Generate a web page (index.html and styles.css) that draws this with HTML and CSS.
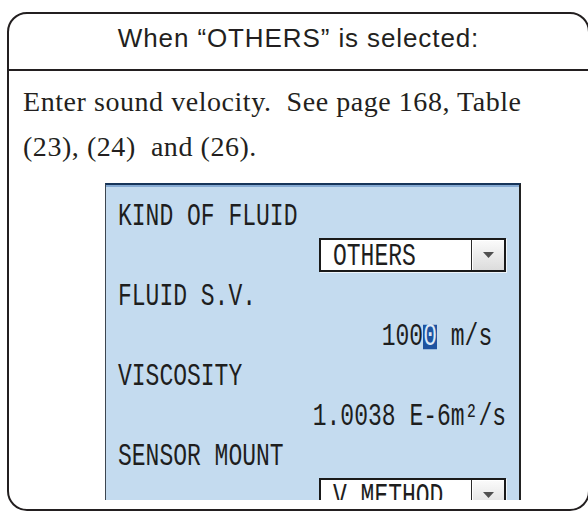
FILE: index.html
```html
<!DOCTYPE html>
<html>
  <head>
    <meta charset="UTF-8">
    <title>When OTHERS is selected</title>

    <link rel="stylesheet" href="styles.css">
  </head>
  <body>

    <div class='panel'>
      <div class='panel-head'>When “OTHERS” is selected:</div>

      <div class='panel-body'>
        <p class='note'>
          Enter sound velocity.&nbsp; See page 168, Table<br>
          (23), (24)&nbsp; and (26).
        </p>

        <div class='lcd'>
          <div class='lcd-row'><span class='txt'>KIND OF FLUID</span></div>
          <div class='lcd-row value'>
            <div class='combo'>
              <div class='combo-field'><span class='txt'>OTHERS</span></div>
              <div class='combo-btn'>
                <svg width='11' height='6' viewBox='0 0 11 6'><polygon points='0,0 11,0 5.5,6' fill='#505050'/></svg>
              </div>
            </div>
          </div>
          <div class='lcd-row'><span class='txt'>FLUID S.V.</span></div>
          <div class='lcd-row value'><span class='txt'>100<span class='cursor'>0</span> m/s&nbsp;</span></div>
          <div class='lcd-row'><span class='txt'>VISCOSITY</span></div>
          <div class='lcd-row value'><span class='txt'>1.0038 E-6m²/s</span></div>
          <div class='lcd-row'><span class='txt'>SENSOR MOUNT</span></div>
          <div class='lcd-row value'>
            <div class='combo'>
              <div class='combo-field'><span class='txt'>V METHOD</span></div>
              <div class='combo-btn'>
                <svg width='11' height='6' viewBox='0 0 11 6'><polygon points='0,0 11,0 5.5,6' fill='#505050'/></svg>
              </div>
            </div>
          </div>
        </div>
      </div>
    </div>

  </body>
</html>
```

FILE: styles.css
```css
html, body {
  margin: 0;
  padding: 0;
  height: 100%;
  width: 100%;
  overflow: hidden;
  background: white;
}

.panel {
  box-sizing: border-box;
  width: 583px;
  margin: 12px 0 0 7px;
  border: 2px solid #231f20;
  border-radius: 20px;
  color: #231f20;
}

.panel-head {
  height: 57px;
  box-sizing: border-box;
  padding-top: 10px;
  border-bottom: 2px solid #231f20;
  font-family: "Liberation Sans", Arial, sans-serif;
  font-size: 26px;
  line-height: 28px;
  letter-spacing: 0.9px;
  text-align: center;
}

.panel-body {
  padding: 8px 0 9px 14px;
}

.note {
  margin: 0;
  font-family: "Liberation Serif", "Times New Roman", serif;
  font-size: 28px;
  line-height: 45px;
  letter-spacing: 0.55px;
}

.lcd {
  box-sizing: border-box;
  width: 416px;
  height: 317px;
  margin: 14px 0 0 82px;
  padding: 10px 13px 0 12px;
  overflow: hidden;
  background: #c4dbef;
  border-top: 2px solid #17355a;
  border-left: 1px solid #3c4650;
  border-right: 2px solid #222;
  box-shadow: inset 0 2px 0 #86aad3;
  font-family: "Liberation Mono", "DejaVu Sans Mono", monospace;
  font-size: 23px;
  color: #1e1e1e;
}

.lcd-row {
  height: 40px;
  line-height: 40px;
  display: flex;
  align-items: center;
  white-space: pre;
}

.lcd-row.value {
  justify-content: flex-end;
}

.txt {
  display: inline-block;
  transform: translateY(2px) scaleY(1.36);
}

.cursor {
  display: inline-block;
  height: 18px;
  line-height: 18px;
  background: #1f53a0;
  color: #dce8f6;
}

.combo {
  box-sizing: border-box;
  width: 187px;
  height: 34px;
  display: flex;
  background: white;
  border: 2px solid #1a1a1a;
  box-shadow: 1px 1px 0 #eef4fa;
}

.combo-field {
  flex: 1;
  padding-left: 12px;
  line-height: 30px;
}

.combo-btn {
  width: 32px;
  display: flex;
  align-items: center;
  justify-content: center;
  border-left: 1px solid #2a2a2a;
  background: linear-gradient(#fbfbfb, #dcdcdc);
  box-shadow: inset 1px 1px 0 white;
}
```
